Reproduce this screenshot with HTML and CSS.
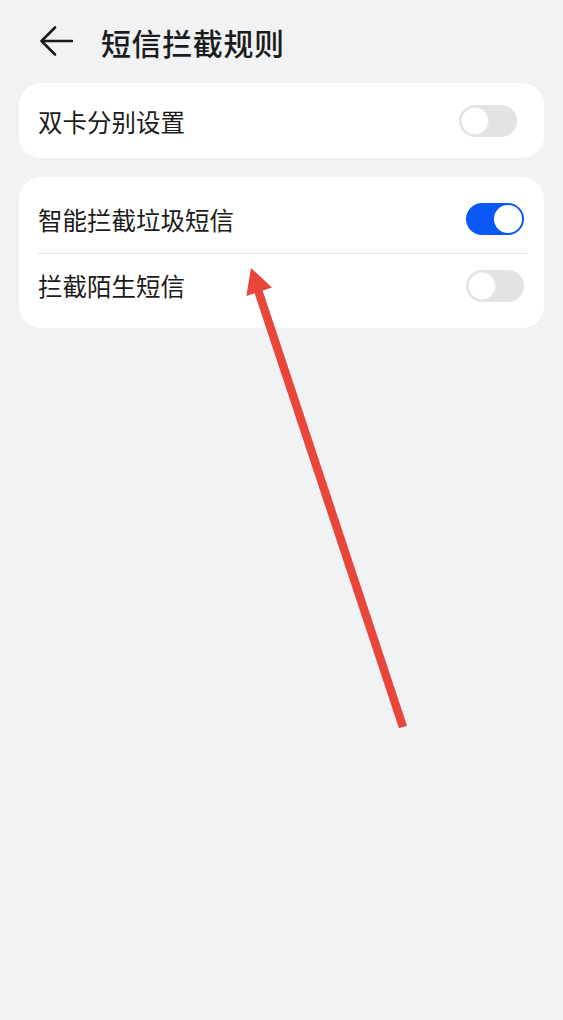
FILE: index.html
```html
<!DOCTYPE html>
<html lang="zh-CN">
<head>
    <meta charset="UTF-8">
    <meta name="viewport" content="width=device-width, initial-scale=1.0">
    <title>短信拦截规则</title>
    <link rel="stylesheet" href="styles.css">
</head>
<body>
    <!-- Judul -->
    <header class="top-bar">
        <svg class="back-icon" width="34" height="30" viewBox="0 0 34 30">
            <path d="M16 1.5 L2.5 15 L16 28.5 M2.5 15 H33" fill="none" stroke="#1b1b1b" stroke-width="2.6" stroke-linecap="round" stroke-linejoin="round"/>
        </svg>
        <h1>短信拦截规则</h1>
    </header>

    <!-- Kartu pengaturan -->
    <section class="card single">
        <div class="row">
            <span class="label">双卡分别设置</span>
            <span class="switch"></span>
        </div>
    </section>

    <section class="card">
        <div class="row">
            <span class="label">智能拦截垃圾短信</span>
            <span class="switch on"></span>
        </div>
        <div class="divider"></div>
        <div class="row last">
            <span class="label">拦截陌生短信</span>
            <span class="switch"></span>
        </div>
    </section>

    <!-- Panah anotasi -->
    <svg class="annotation" width="563" height="1020" viewBox="0 0 563 1020">
        <line x1="403" y1="727" x2="258" y2="290" stroke="#e8463b" stroke-width="8.5"/>
        <polygon points="251,268 272,287.6 246.4,296" fill="#e8463b"/>
    </svg>
</body>
</html>
```

FILE: styles.css
```css
/* Umum */
body {
    margin: 0;
    padding: 0;
    width: 563px;
    height: 1020px;
    background-color: #f1f2f4;
    font-family: "Noto Sans CJK SC", "Noto Sans", sans-serif;
    color: #1b1b1b;
    position: relative;
    overflow: hidden;
}

/* Header */
.top-bar {
    height: 83px;
    display: flex;
    align-items: center;
    padding-left: 39px;
    box-sizing: border-box;
}
.back-icon {
    margin-top: -1px;
}
.top-bar h1 {
    margin: 0 0 0 28px;
    font-size: 30px;
    font-weight: 500;
    letter-spacing: 0.6px;
    line-height: 1;
}

/* Kartu */
.card {
    margin: 0 19px 19px 19px;
    background-color: #ffffff;
    border-radius: 22px;
    padding: 8px 20px 10px 19px;
}
.card.single {
    padding: 0 27px 0 19px;
}
.row {
    height: 68px;
    display: flex;
    align-items: center;
    justify-content: space-between;
}
.row.last {
    height: 64px;
}
.card.single .row {
    height: 75px;
}
.label {
    font-size: 24.5px;
    line-height: 1;
    margin-top: 3px;
}
.row.last .label {
    margin-top: 0;
}
.divider {
    height: 1px;
    background-color: #e4e4e4;
    margin-right: -3px;
}

/* Sakelar */
.switch {
    width: 58px;
    height: 32px;
    border-radius: 16px;
    background-color: #e3e3e3;
    position: relative;
    box-sizing: border-box;
}
.switch::after {
    content: "";
    position: absolute;
    left: 2px;
    top: 2px;
    width: 28px;
    height: 28px;
    border-radius: 50%;
    background-color: #ffffff;
    box-sizing: border-box;
    border: 1px solid #ececec;
}
.switch.on {
    background-color: #0a59f7;
}
.switch.on::after {
    left: auto;
    right: 2px;
    border: none;
}

/* Panah anotasi */
.annotation {
    position: absolute;
    left: 0;
    top: 0;
    pointer-events: none;
}
```
